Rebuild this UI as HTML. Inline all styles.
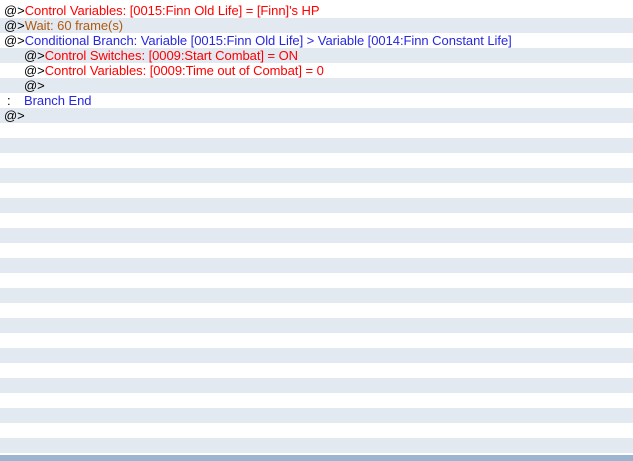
<!DOCTYPE html><html><head><style>
body{margin:0;width:633px;height:461px;overflow:hidden;background:#fff;font-family:"Liberation Sans",sans-serif;font-size:13px;position:relative}
.rows{position:absolute;left:0;top:3px;width:633px}
.r{height:15px;line-height:15px;white-space:pre;padding-left:4px;letter-spacing:-0.05px}
.r:nth-child(even){background:#e3e9f0}
.i{padding-left:24px}
.k{color:#000}.red{color:#f00}.br{color:#b05a10}.bl{color:#2828e0}
.bar{position:absolute;left:0;top:455px;width:633px;height:6px;background:#9bb4cf}
</style></head><body>
<div class="rows">
<div class="r"><span class="k">@&gt;</span><span class="red">Control Variables: [0015:Finn Old Life] = [Finn]'s HP</span></div>
<div class="r"><span class="k">@&gt;</span><span class="br">Wait: 60 frame(s)</span></div>
<div class="r"><span class="k">@&gt;</span><span class="bl">Conditional Branch: Variable [0015:Finn Old Life] &gt; Variable [0014:Finn Constant Life]</span></div>
<div class="r i"><span class="k">@&gt;</span><span class="red">Control Switches: [0009:Start Combat] = ON</span></div>
<div class="r i"><span class="k">@&gt;</span><span class="red">Control Variables: [0009:Time out of Combat] = 0</span></div>
<div class="r i"><span class="k">@&gt;</span></div>
<div class="r" style="padding-left:7px"><span class="k" style="display:inline-block;width:17px">:</span><span class="bl">Branch End</span></div>
<div class="r"><span class="k">@&gt;</span></div>
<div class="r"></div><div class="r"></div><div class="r"></div><div class="r"></div><div class="r"></div><div class="r"></div><div class="r"></div><div class="r"></div><div class="r"></div><div class="r"></div><div class="r"></div><div class="r"></div><div class="r"></div><div class="r"></div><div class="r"></div><div class="r"></div><div class="r"></div><div class="r"></div><div class="r"></div><div class="r"></div><div class="r"></div><div class="r"></div>
</div>
<div class="bar"></div>
</body></html>
